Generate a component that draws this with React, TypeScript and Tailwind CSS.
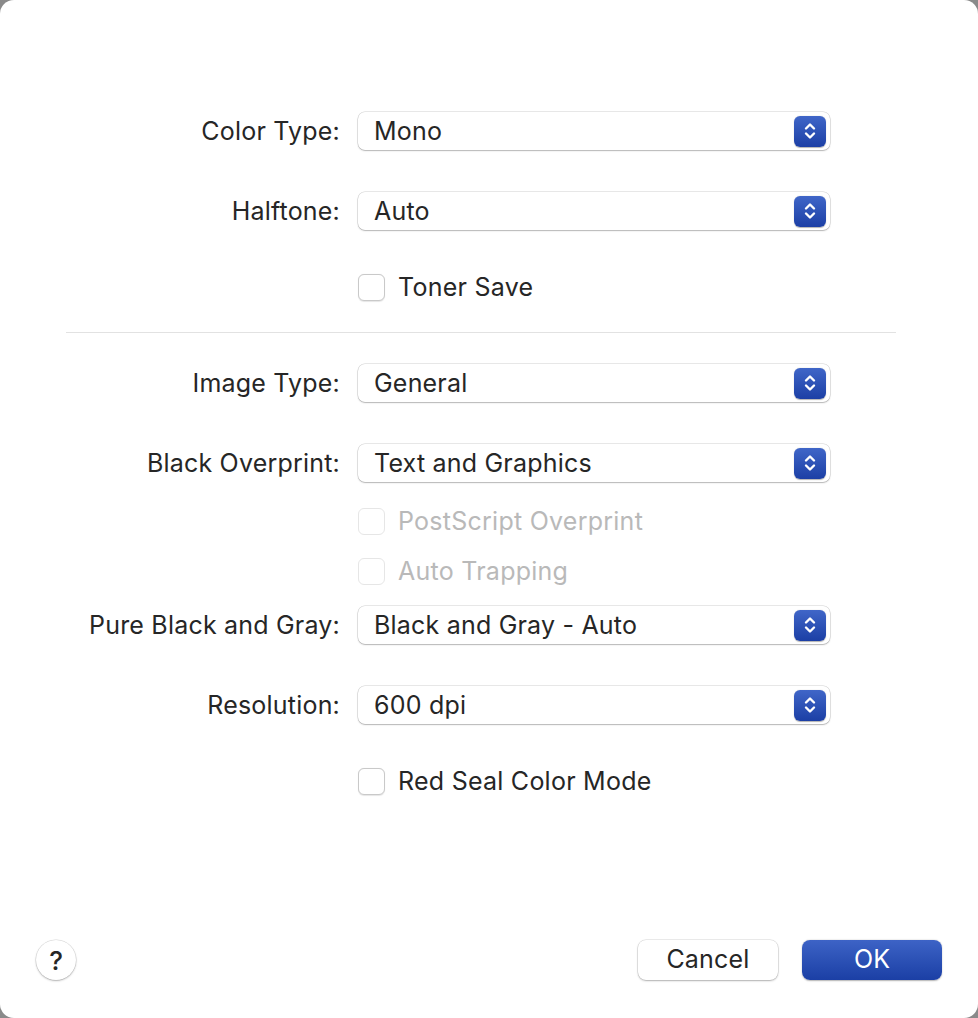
import React from "react";

const font = { fontFamily: "Inter, 'Noto Sans', 'Liberation Sans', sans-serif" };

function Stepper() {
  return (
    <div className="flex h-[31px] w-[32px] items-center justify-center rounded-[6px] bg-gradient-to-b from-[#4066c8] to-[#1c3fa5] shadow-[0_0.5px_1px_rgba(0,0,0,0.3)]">
      <svg width="16" height="22" viewBox="0 0 16 22" fill="none" stroke="white" strokeWidth="2.4" strokeLinecap="round" strokeLinejoin="round">
        <path d="M4 8.5 L8 4.5 L12 8.5" />
        <path d="M4 13.5 L8 17.5 L12 13.5" />
      </svg>
    </div>
  );
}

function SelectRow({ label, value, className = "" }: { label: string; value: string; className?: string }) {
  return (
    <div className={"flex h-[38px] items-center " + className}>
      <div className="w-[340px] whitespace-nowrap pt-px text-right text-[25px] tracking-[0.2px] text-[#262626]">{label}</div>
      <div className="ml-[18px] flex h-[38px] w-[472px] items-center rounded-[7px] bg-white pl-[16px] pr-[4px] shadow-[0_0_0_0.5px_rgba(0,0,0,0.18),0_1px_1.5px_rgba(0,0,0,0.22)]">
        <span className="flex-1 whitespace-nowrap pt-px text-[25px] tracking-[0.2px] text-[#262626]">{value}</span>
        <Stepper />
      </div>
    </div>
  );
}

function CheckRow({ label, disabled = false, className = "" }: { label: string; disabled?: boolean; className?: string }) {
  return (
    <div className={"flex h-[28px] items-center " + className}>
      <div className="ml-[358px] flex items-center">
        <div
          className={
            "h-[27px] w-[27px] rounded-[6px] bg-white " +
            (disabled
              ? "border border-[#e6e6e6]"
              : "border border-[#c9c9c9] shadow-[0_0.5px_1px_rgba(0,0,0,0.1)]")
          }
        />
        <span className={"ml-[13px] whitespace-nowrap pt-px text-[25px] tracking-[0.25px] " + (disabled ? "text-[#b9b9b9]" : "text-[#262626]")}>{label}</span>
      </div>
    </div>
  );
}

export default function App() {
  return (
    <div className="h-[1018px] w-[978px] bg-[#8a8a8a]" style={font}>
      <div className="flex h-full w-full flex-col rounded-[14px] bg-white pt-[112px]">
        <SelectRow label="Color Type:" value="Mono" />
        <SelectRow label="Halftone:" value="Auto" className="mt-[42px]" />
        <CheckRow label="Toner Save" className="mt-[43px]" />
        <div className="ml-[66px] mt-[31px] h-px w-[830px] bg-[#e2e2e2]" />
        <SelectRow label="Image Type:" value="General" className="mt-[31px]" />
        <SelectRow label="Black Overprint:" value="Text and Graphics" className="mt-[42px]" />
        <CheckRow label="PostScript Overprint" disabled className="mt-[25px]" />
        <CheckRow label="Auto Trapping" disabled className="mt-[22px]" />
        <SelectRow label="Pure Black and Gray:" value="Black and Gray - Auto" className="mt-[21px]" />
        <SelectRow label="Resolution:" value="600 dpi" className="mt-[42px]" />
        <CheckRow label="Red Seal Color Mode" className="mt-[43px]" />

        <div className="mt-auto mb-[38px] flex items-center pl-[36px] pr-[36px]">
          <div className="flex h-[40px] w-[40px] items-center justify-center rounded-full bg-white text-[26px] font-medium text-[#262626] shadow-[0_0_0_0.5px_rgba(0,0,0,0.15),0_1px_2px_rgba(0,0,0,0.25)]">
            ?
          </div>
          <div className="ml-auto flex items-center gap-[24px]">
            <button className="h-[40px] w-[140px] rounded-[8px] bg-white text-[25px] tracking-[0.2px] text-[#262626] shadow-[0_0_0_0.5px_rgba(0,0,0,0.15),0_1px_2px_rgba(0,0,0,0.25)]">
              Cancel
            </button>
            <button className="h-[40px] w-[140px] rounded-[8px] bg-gradient-to-b from-[#3d63c6] to-[#1b3fa5] text-[25px] text-white shadow-[0_0.5px_1.5px_rgba(0,0,0,0.3)]">
              OK
            </button>
          </div>
        </div>
      </div>
    </div>
  );
}
